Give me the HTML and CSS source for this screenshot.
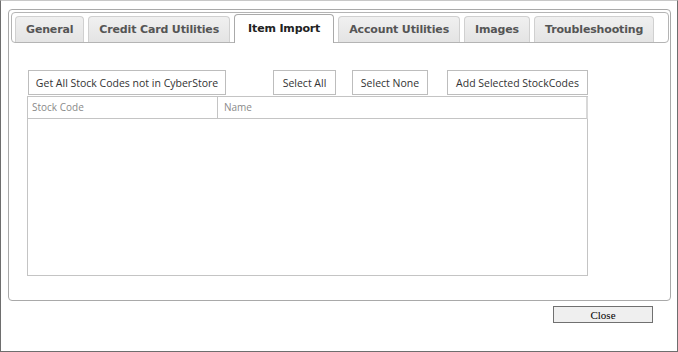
FILE: index.html
```html
<!DOCTYPE html>
<html lang="en">
<head>
    <meta charset="UTF-8">
    <title>Item Import</title>
    <link rel="stylesheet" href="styles.css">
</head>
<body>
    <div class="dialog">
        <div class="tabs">
            <ul class="tab-nav">
                <li class="tab">General</li>
                <li class="tab">Credit Card Utilities</li>
                <li class="tab active">Item Import</li>
                <li class="tab">Account Utilities</li>
                <li class="tab">Images</li>
                <li class="tab">Troubleshooting</li>
            </ul>
            <div class="tab-body">
                <div class="btn-row">
                    <button type="button" class="btn btn-get">Get All Stock Codes not in CyberStore</button>
                    <button type="button" class="btn btn-all">Select All</button>
                    <button type="button" class="btn btn-none">Select None</button>
                    <button type="button" class="btn btn-add">Add Selected StockCodes</button>
                </div>
                <div class="grid">
                    <div class="grid-head">
                        <div class="col col-code">Stock Code</div>
                        <div class="col col-name">Name</div>
                    </div>
                    <div class="grid-rows"></div>
                </div>
            </div>
        </div>
        <div class="footer">
            <button type="button" class="close-btn">Close</button>
        </div>
    </div>
</body>
</html>
```

FILE: styles.css
```css
html, body { margin: 0; padding: 0; background: #fff; }

.dialog {
    width: 678px;
    height: 352px;
    box-sizing: border-box;
    border: 1px solid #6e6e6e;
    border-top-color: #c8c8c8;
    padding: 8px 6px 0 7px;
}

.tabs {
    width: 663px;
    height: 292px;
    box-sizing: border-box;
    border: 1px solid #a9a9a9;
    border-radius: 4px;
    padding: 2px 1px 0 2px;
}

.tab-nav {
    list-style: none;
    margin: 0;
    padding: 0 0 0 3px;
    height: 31px;
    box-sizing: border-box;
    border: 1px solid #b4b4b4;
    border-radius: 4px;
    background: #fff;
    display: flex;
    align-items: flex-end;
    gap: 4px;
}

.tab {
    flex-shrink: 0;
    height: 26px;
    line-height: 25px;
    box-sizing: border-box;
    padding: 0 10px;
    border: 1px solid #d0d0d0;
    border-bottom: 0;
    border-radius: 4px 4px 0 0;
    background: linear-gradient(#f0f0f0, #e4e4e4);
    color: #555;
    font-family: "DejaVu Sans", sans-serif;
    font-weight: bold;
    font-size: 11px;
    letter-spacing: -0.15px;
    white-space: nowrap;
}

.tab.active {
    height: 29px;
    line-height: 27px;
    margin-bottom: -1px;
    padding: 0 13px;
    background: #fff;
    border-color: #aaa;
    color: #222;
    position: relative;
}

.tab-body { padding: 27px 0 0 17px; }

.btn-row { display: flex; height: 25px; }

.btn {
    height: 25px;
    box-sizing: border-box;
    border: 1px solid #bdbdbd;
    background: #fff;
    color: #333;
    font-family: "Open Sans", sans-serif;
    font-size: 10.5px;
    padding: 0;
    text-align: center;
}

.btn-get { width: 198px; }
.btn-all { width: 63px; margin-left: 47px; }
.btn-none { width: 76px; margin-left: 16px; }
.btn-add { width: 141px; margin-left: 19px; }

.grid {
    margin: 1px 0 0 -1px;
    width: 561px;
    height: 180px;
    box-sizing: border-box;
    border: 1px solid #c4c4c4;
}

.grid-head {
    display: flex;
    height: 21px;
    border-bottom: 1px solid #c4c4c4;
    border-right: 2px solid #d8d8d8;
    margin-right: -1px;
}

.col {
    font-family: "Open Sans", sans-serif;
    font-size: 10px;
    color: #8a8a8a;
    line-height: 21px;
    padding-left: 4px;
}

.col-code { width: 185px; border-right: 1px solid #c4c4c4; }
.col-name { flex: 1; padding-left: 6px; }

.footer {
    display: flex;
    justify-content: flex-end;
    padding: 5px 18px 0 0;
}

.close-btn {
    width: 100px;
    height: 17px;
    box-sizing: border-box;
    border: 1px solid #707070;
    background: #efefef;
    color: #000;
    font-family: "Liberation Serif", serif;
    font-size: 11px;
    line-height: 14px;
    padding: 0;
}
```
